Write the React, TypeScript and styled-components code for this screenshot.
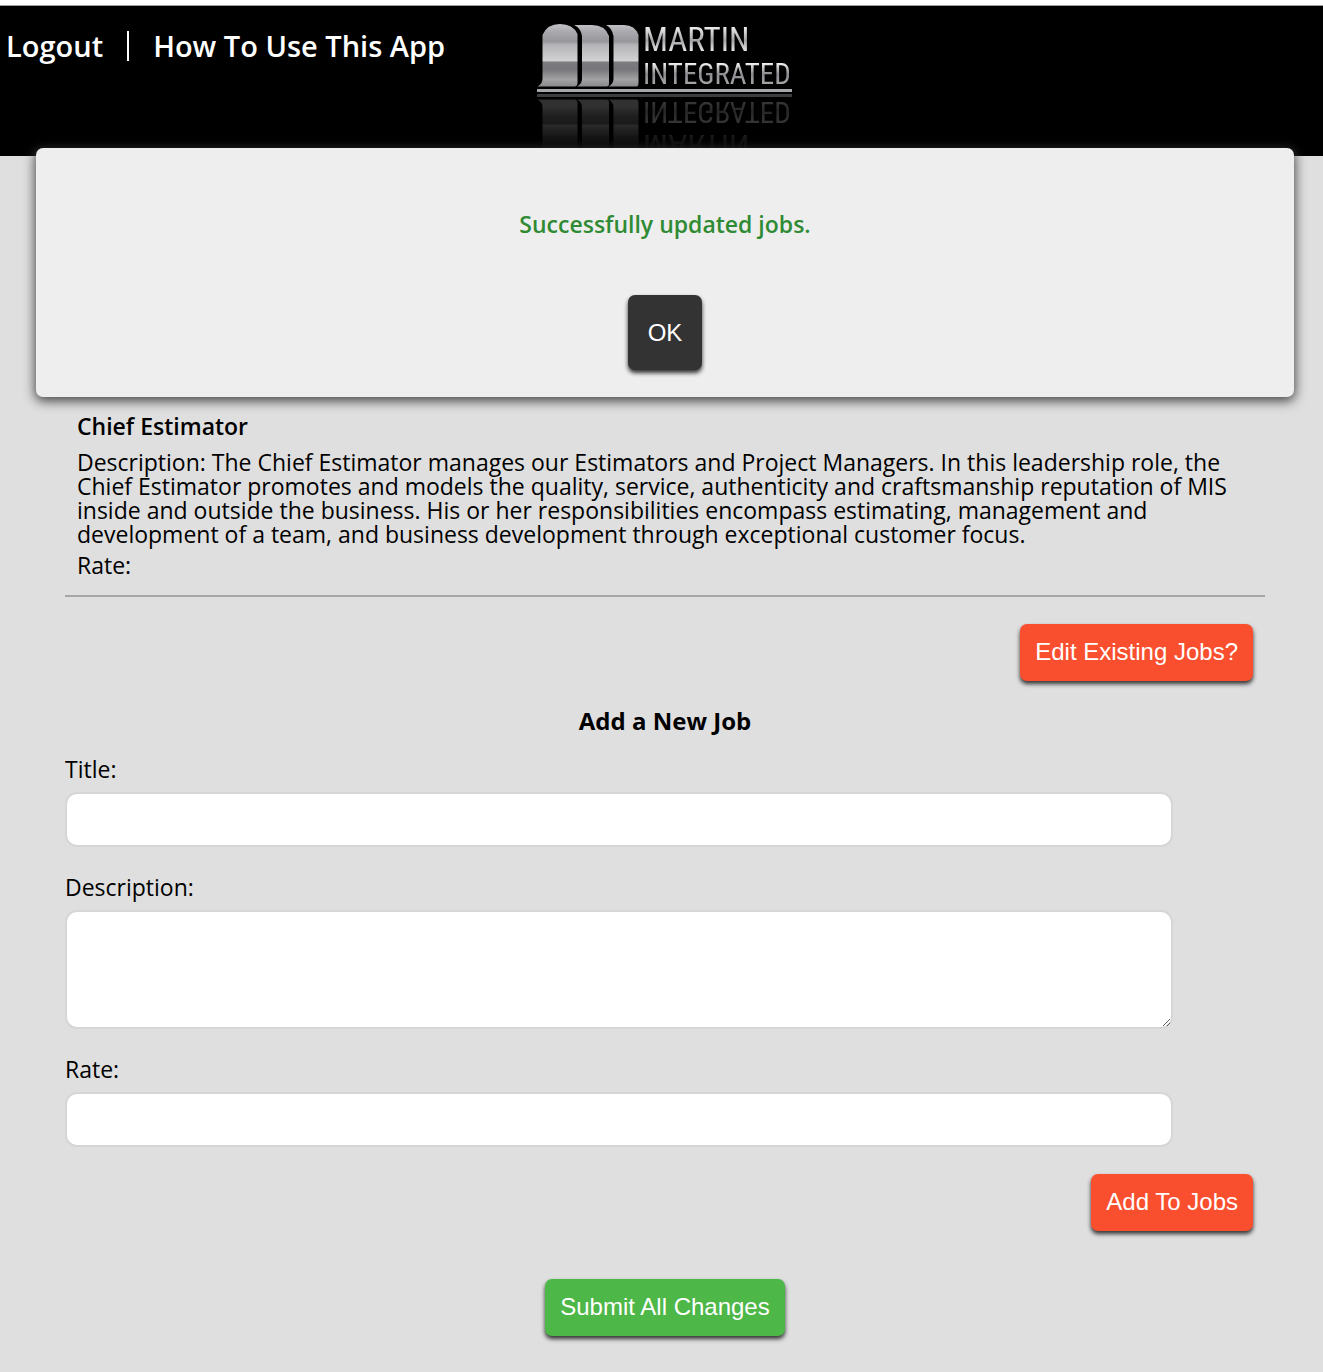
import React from "react";
import styled, { createGlobalStyle } from "styled-components";

const GlobalStyle = createGlobalStyle`
  * {
    box-sizing: border-box;
  }
  body {
    margin: 0;
    background: #dfdfdf;
    color: #000;
    font-family: "Open Sans", "Noto Sans", sans-serif;
    font-size: 23px;
    font-weight: 400;
    line-height: 24px;
  }
`;

const TopStrip = styled.div`
  height: 6px;
  background: #fff;
  border-bottom: 1px solid #9aa09c;
`;

const Header = styled.header`
  display: grid;
  grid-template-columns: 1fr auto 1fr;
  align-items: start;
  height: 150px;
  padding: 6px 0 0 6px;
  background: #000;
`;

const Nav = styled.nav`
  display: flex;
  gap: 24px;
  padding-top: 14px;
  color: #fff;
  font-size: 29px;
  font-weight: 600;
  line-height: 40px;
  white-space: nowrap;
`;

const NavLink = styled.a`
  color: inherit;
  text-decoration: none;
`;

const Divider = styled.span`
  align-self: center;
  width: 2px;
  height: 30px;
  background: #fff;
`;

const LogoArt = styled.svg`
  display: block;
  -webkit-box-reflect: below 0
    linear-gradient(to top, rgba(0, 0, 0, 0.38), rgba(0, 0, 0, 0.2) 40%, rgba(0, 0, 0, 0.03) 68%);
`;

const LogoText = styled.text`
  font-family: "Roboto Condensed", "Liberation Sans Narrow", sans-serif;
  font-weight: 400;
`;

const Overlay = styled.div`
  position: absolute;
  top: 148px;
  left: 6px;
  right: 0;
  padding: 0 29px 0 30px;
`;

const Modal = styled.section`
  display: flex;
  flex-direction: column;
  align-items: center;
  gap: 59px;
  padding: 64px 24px 27px;
  border-radius: 7px;
  background: #eee;
  box-shadow: 0 3px 12px 1px #444;
`;

const Message = styled.p`
  margin: 0;
  color: #2e8b33;
  font-weight: 600;
`;

const Button = styled.button<{ $bg: string; $large?: boolean }>`
  padding: ${(p) => (p.$large ? "24px 20px" : "14px 15px 16px")};
  border: 0;
  border-radius: 7px;
  background: ${(p) => p.$bg};
  box-shadow: 0 3px 4px #333;
  color: #fff;
  font-family: "Liberation Sans", Arial, sans-serif;
  font-size: 24px;
  line-height: 27px;
  cursor: pointer;
`;

const Main = styled.main`
  padding: 258px 58px 36px 65px;
`;

const Content = styled.div`
  max-width: 1200px;
  margin: 0 auto;
`;

const Job = styled.article`
  display: flex;
  flex-direction: column;
  gap: 7px;
  padding: 0 12px 18px;
  border-bottom: 2px solid #a6a6a6;
`;

const JobTitle = styled.h3`
  margin: 0 0 5px;
  font-size: 23px;
  font-weight: 600;
`;

const Text = styled.p`
  margin: 0;
`;

const Actions = styled.div<{ $center?: boolean }>`
  display: flex;
  justify-content: ${(p) => (p.$center ? "center" : "flex-end")};
  padding: ${(p) => (p.$center ? "48px 0 0" : "27px 12px 0")};
`;

const FormTitle = styled.h2`
  margin: 28px 0 24px;
  font-size: 24px;
  font-weight: 700;
  text-align: center;
`;

const Field = styled.div`
  display: flex;
  flex-direction: column;
  align-items: flex-start;
  gap: 11px;
  & + & {
    margin-top: 28px;
  }
`;

const Input = styled.input`
  box-sizing: content-box;
  width: 90%;
  height: 27px;
  padding: 12px;
  border: 2px solid #d6d6d6;
  border-radius: 12px;
  background: #fff;
  font: inherit;
`;

const TextArea = styled.textarea`
  box-sizing: content-box;
  width: 90%;
  height: 91px;
  padding: 12px;
  border: 2px solid #d6d6d6;
  border-radius: 12px;
  background: #fff;
  font: inherit;
`;

function Logo() {
  return (
    <LogoArt width="256" height="81" viewBox="537 12 256 81" role="img" aria-label="Martin Integrated">
      <defs>
        <linearGradient id="steel" gradientUnits="userSpaceOnUse" x1="0" y1="24" x2="0" y2="87">
          <stop offset="0" stopColor="#c4c4c8" />
          <stop offset="0.12" stopColor="#aaaaae" />
          <stop offset="0.28" stopColor="#96969b" />
          <stop offset="0.33" stopColor="#b4b4b7" />
          <stop offset="0.59" stopColor="#d2d2d5" />
          <stop offset="0.6" stopColor="#7b7b80" />
          <stop offset="0.72" stopColor="#77777b" />
          <stop offset="0.88" stopColor="#a2a2a5" />
          <stop offset="1" stopColor="#88888b" />
        </linearGradient>
        <linearGradient id="lineOne" gradientUnits="userSpaceOnUse" x1="0" y1="28" x2="0" y2="53">
          <stop offset="0" stopColor="#e8e8e8" />
          <stop offset="0.5" stopColor="#a4a4a8" />
          <stop offset="1" stopColor="#f2f2f2" />
        </linearGradient>
        <linearGradient id="lineTwo" gradientUnits="userSpaceOnUse" x1="0" y1="63" x2="0" y2="85">
          <stop offset="0" stopColor="#f4f4f4" />
          <stop offset="0.5" stopColor="#8a8a8e" />
          <stop offset="1" stopColor="#a8a8ab" />
        </linearGradient>
      </defs>
      <g fill="url(#steel)">
        <path d="M542.5 35 Q547 24 560 24 Q573 24 577.5 34 V84 Q577 86 575 86.5 H537.5 Q542.5 84 542.5 79 Z" />
        <path d="M574 25 H592 Q605 25 609 36 V84 Q609 86 607 86.5 H577 Q582 84 582 79 V36 Q581 28 574 25 Z" />
        <path d="M606 25 H624 Q635 25 638.5 35 V84 Q638 86 637 86.5 H608.5 Q613.5 84 613.5 79 V36 Q612 28 606 25 Z" />
      </g>
      <LogoText x="643" y="51" fontSize="33" fill="url(#lineOne)">MARTIN</LogoText>
      <LogoText x="643" y="84" fontSize="29" fill="url(#lineTwo)">INTEGRATED</LogoText>
      <rect x="537" y="89" width="255" height="3" fill="#a4a7a9" />
    </LogoArt>
  );
}

export default function App() {
  return (
    <>
      <GlobalStyle />
      <TopStrip />
      <Header>
        <Nav>
          <NavLink href="#logout">Logout</NavLink>
          <Divider />
          <NavLink href="#help">How To Use This App</NavLink>
        </Nav>
        <Logo />
      </Header>
      <Overlay>
        <Modal role="dialog" aria-label="Status">
          <Message>Successfully updated jobs.</Message>
          <Button type="button" $bg="#333" $large>OK</Button>
        </Modal>
      </Overlay>
      <Main>
        <Content>
          <Job>
            <JobTitle>Chief Estimator</JobTitle>
            <Text>
              Description: The Chief Estimator manages our Estimators and Project Managers. In this leadership role,
              the Chief Estimator promotes and models the quality, service, authenticity and craftsmanship reputation
              of MIS inside and outside the business. His or her responsibilities encompass estimating, management and
              development of a team, and business development through exceptional customer focus.
            </Text>
            <Text>Rate:</Text>
          </Job>
          <Actions>
            <Button type="button" $bg="#fa4f2e">Edit Existing Jobs?</Button>
          </Actions>
          <form onSubmit={(e) => e.preventDefault()}>
            <FormTitle>Add a New Job</FormTitle>
            <Field>
              <label htmlFor="title">Title:</label>
              <Input id="title" type="text" />
            </Field>
            <Field>
              <label htmlFor="description">Description:</label>
              <TextArea id="description" />
            </Field>
            <Field>
              <label htmlFor="rate">Rate:</label>
              <Input id="rate" type="text" />
            </Field>
            <Actions>
              <Button type="button" $bg="#fa4f2e">Add To Jobs</Button>
            </Actions>
            <Actions $center>
              <Button type="submit" $bg="#4db748">Submit All Changes</Button>
            </Actions>
          </form>
        </Content>
      </Main>
    </>
  );
}
